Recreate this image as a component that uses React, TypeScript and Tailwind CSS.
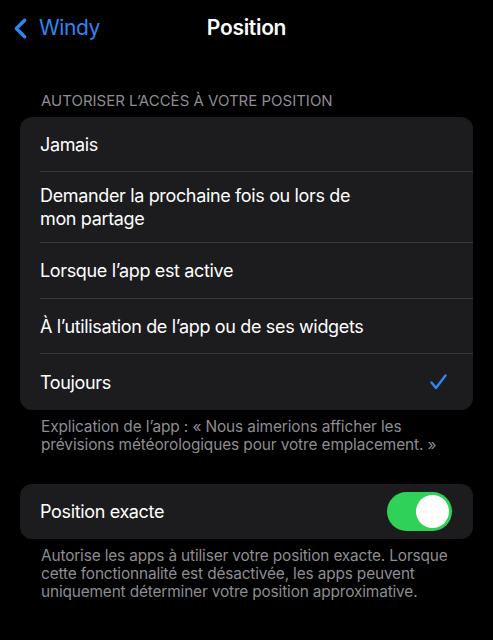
import { ChevronLeft } from "lucide-react";

const options = [
  { label: "Jamais", h: "h-[55px]" },
  { label: "Demander la prochaine fois ou lors de\nmon partage", h: "h-[71px]" },
  { label: "Lorsque l’app est active", h: "h-[56px]" },
  { label: "À l’utilisation de l’app ou de ses widgets", h: "h-[55px]" },
  { label: "Toujours", h: "h-[56px]", checked: true },
];

function Check() {
  return (
    <svg width="17" height="16" viewBox="0 0 17 16" fill="none">
      <path
        d="M1.5 8.5 L6 14 L15.5 1.5"
        stroke="#2f86f0"
        strokeWidth="2.4"
        strokeLinecap="round"
        strokeLinejoin="round"
      />
    </svg>
  );
}

export default function App() {
  return (
    <div className="min-h-[640px] bg-black text-white font-['Inter','Liberation_Sans',sans-serif] antialiased">
      <div className="grid h-[56px] grid-cols-[1fr_auto_1fr] items-center">
        <div className="flex items-center pl-[4px] text-[#2f86f0]">
          <ChevronLeft size={33} strokeWidth={2.5} />
          <span className="ml-[2px] text-[21px] tracking-[-0.4px]">Windy</span>
        </div>
        <h1 className="text-[21px] font-semibold tracking-[-0.3px]">Position</h1>
        <div />
      </div>

      <div className="px-[20px]">
        <p className="mt-[36px] mb-[7px] pl-[21px] text-[15px] leading-[18px] text-[#8d8d92] tracking-[0px]">
          AUTORISER L’ACCÈS À VOTRE POSITION
        </p>
        <div className="rounded-[12px] bg-[#1c1c1e]">
          {options.map((o, i) => (
            <div key={i} className="pl-[20px]">
              <div
                className={`flex items-center justify-between pr-[26px] ${o.h} ${
                  i < options.length - 1 ? "border-b border-[#38383a]" : ""
                }`}
              >
                <span className="whitespace-pre-line text-[18px] leading-[23px] tracking-[-0.35px]">
                  {o.label}
                </span>
                {o.checked && <Check />}
              </div>
            </div>
          ))}
        </div>
        <p className="mt-[8px] pl-[21px] pr-[10px] text-[15.4px] leading-[18px] text-[#8d8d92] tracking-[-0.1px]">
          Explication de l’app : « Nous aimerions afficher les
          <br />
          prévisions météorologiques pour votre emplacement. »
        </p>

        <div className="mt-[30px] flex h-[55px] items-center justify-between rounded-[12px] bg-[#1c1c1e] pl-[20px] pr-[21px]">
          <span className="text-[18px] tracking-[-0.35px]">Position exacte</span>
          <div className="flex h-[39px] w-[65px] items-center justify-end rounded-full bg-[#30d158] p-[3px]">
            <div className="h-[33px] w-[33px] rounded-full bg-white" />
          </div>
        </div>
        <p className="mt-[8px] pl-[21px] pr-[10px] text-[15.4px] leading-[18px] text-[#8d8d92] tracking-[-0.15px]">
          Autorise les apps à utiliser votre position exacte. Lorsque
          <br />
          cette fonctionnalité est désactivée, les apps peuvent
          <br />
          uniquement déterminer votre position approximative.
        </p>
      </div>
    </div>
  );
}
